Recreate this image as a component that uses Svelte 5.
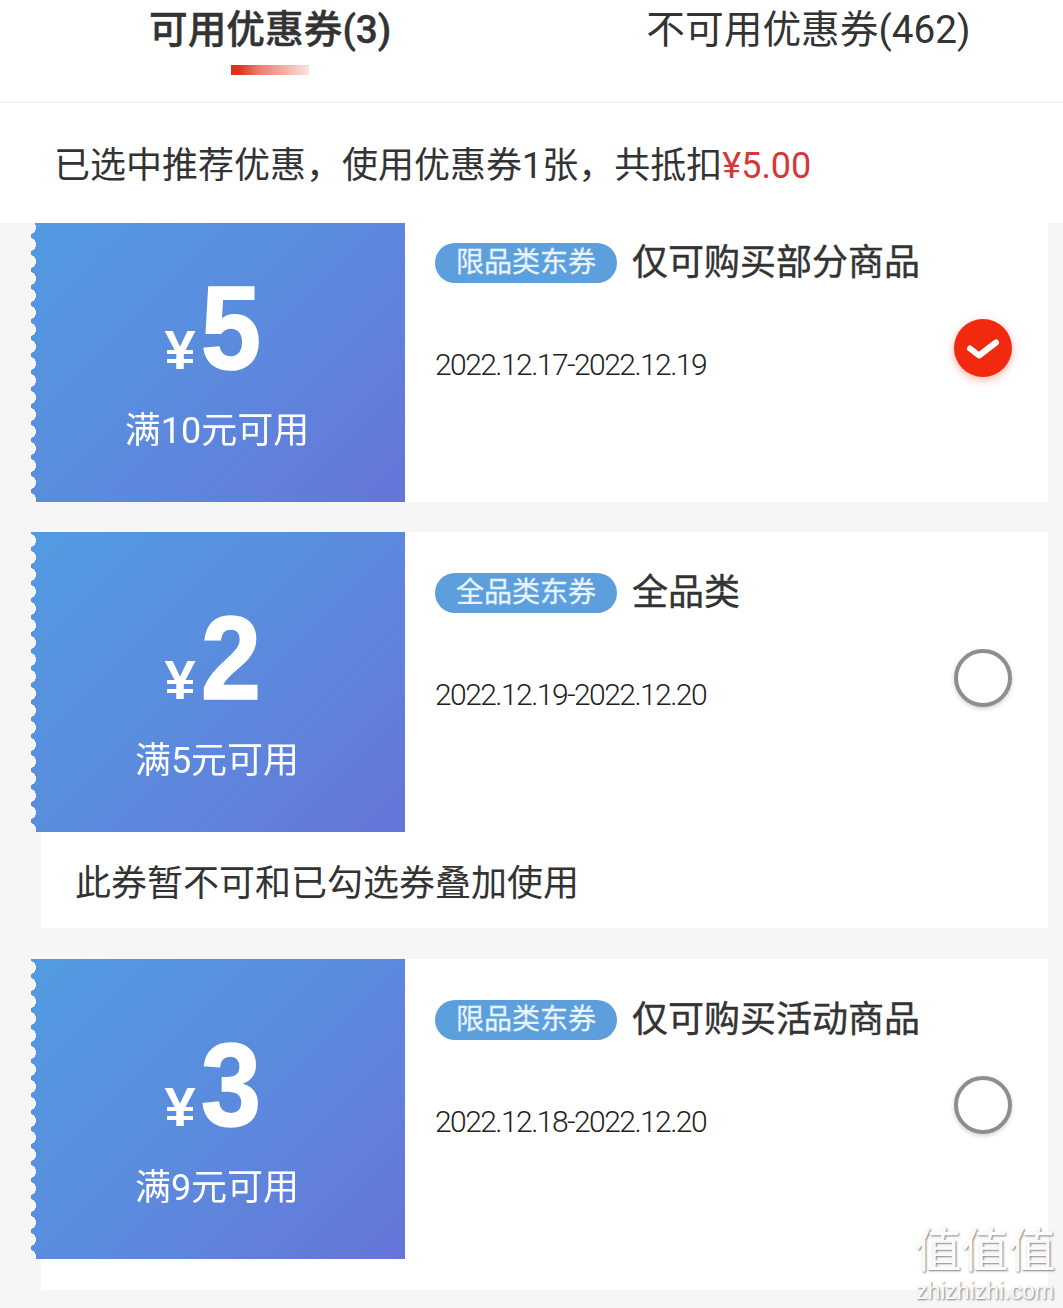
<script lang="ts">
  const coupons = [
    { amount: '5', cond: '满10元可用', tag: '限品类东券', title: '仅可购买部分商品', date: '2022.12.17-2022.12.19', selected: true },
    { amount: '2', cond: '满5元可用', tag: '全品类东券', title: '全品类', date: '2022.12.19-2022.12.20', selected: false, notice: '此券暂不可和已勾选券叠加使用' },
    { amount: '3', cond: '满9元可用', tag: '限品类东券', title: '仅可购买活动商品', date: '2022.12.18-2022.12.20', selected: false, notice: ' ', short: true },
  ];
</script>

<div class="page">
  <header class="tabs">
    <div class="tab active">
      <span>可用优惠券(3)</span>
      <i class="underline"></i>
    </div>
    <div class="tab">
      <span>不可用优惠券(462)</span>
    </div>
  </header>

  <p class="summary">已选中推荐优惠，使用优惠券1张，共抵扣<em>¥5.00</em></p>

  <div class="list">
    {#each coupons as c}
      <section class="item">
        <div class="coupon">
          <div class="stub">
            <div class="price"><span class="yen">¥</span><span class="num">{c.amount}</span></div>
            <div class="cond">{c.cond}</div>
          </div>
          <div class="body">
            <div class="info">
              <div class="head">
                <span class="tag">{c.tag}</span>
                <span class="title">{c.title}</span>
              </div>
              <div class="date">{c.date}</div>
            </div>
            {#if c.selected}
              <span class="radio on">
                <svg viewBox="0 0 58 58" width="58" height="58" aria-hidden="true">
                  <path d="M16 29.5L25 36.5L42 23.5" fill="none" stroke="#fff" stroke-width="6" stroke-linecap="round" stroke-linejoin="round" />
                </svg>
              </span>
            {:else}
              <span class="radio"></span>
            {/if}
          </div>
        </div>
        {#if c.notice}
          <div class="notice" class:short={c.short}>{c.notice}</div>
        {/if}
      </section>
    {/each}
  </div>

  <div class="watermark" aria-hidden="true">
    <div class="wm-big">值值值</div>
    <div class="wm-small">zhizhizhi.com</div>
  </div>
</div>

<style>
  :global(body) {
    margin: 0;
    background: #f6f6f6;
  }

  .page {
    position: relative;
    width: 1063px;
    height: 1308px;
    overflow: hidden;
    background: #f6f6f6;
    color: #333;
    font-family: Roboto, "Noto Sans CJK SC", sans-serif;
  }

  .tabs {
    display: flex;
    height: 101px;
    padding-left: 149px;
    gap: 255px;
    background: #fff;
    border-bottom: 2px solid #f3f3f3;
    font-size: 38.7px;
    line-height: 60px;
  }

  .tab {
    display: flex;
    flex-direction: column;
    align-items: center;
    white-space: nowrap;
  }

  .tab.active {
    font-weight: 500;
    -webkit-text-stroke: 0.4px #333;
  }

  .underline {
    width: 78px;
    height: 10px;
    margin-top: 5px;
    background: linear-gradient(90deg, #e0321e 0 10%, #ee7a6c 35%, #fbe3de 100%);
  }

  .summary {
    margin: 0;
    height: 120px;
    padding-left: 54px;
    background: #fff;
    font-size: 36px;
    line-height: 126px;
    white-space: nowrap;
  }

  .summary em {
    font-style: normal;
    color: #d6383a;
  }

  .list {
    height: 1085px;
    overflow: hidden;
    padding-left: 31px;
    padding-right: 15px;
  }

  .item {
    margin-bottom: 30px;
  }

  .item:first-child {
    margin-top: -21px;
  }

  .coupon {
    display: flex;
    height: 300px;
  }

  .stub {
    width: 374px;
    flex-shrink: 0;
    display: flex;
    flex-direction: column;
    align-items: center;
    padding-top: 57px;
    box-sizing: border-box;
    color: #fff;
    background: linear-gradient(135deg, #519be1 0%, #5b8bdd 50%, #6675d9 100%);
    -webkit-mask: radial-gradient(circle 7px at -2px 8.5px, transparent 97%, #000) 0 0 / 100% 17px;
    mask: radial-gradient(circle 7px at -2px 8.5px, transparent 97%, #000) 0 0 / 100% 17px;
  }

  .price {
    display: flex;
    align-items: baseline;
    height: 138px;
    font-family: "Liberation Sans", sans-serif;
    font-weight: 700;
    line-height: 138px;
    padding-right: 8px;
  }

  .yen {
    font-size: 56px;
    margin-right: 2px;
  }

  .num {
    display: inline-block;
    font-size: 118px;
    transform: scaleX(0.92);
    -webkit-text-stroke: 1.5px #fff;
  }

  .cond {
    margin-top: 9px;
    padding-right: 2px;
    font-size: 36px;
    line-height: 50px;
    white-space: nowrap;
  }

  .body {
    flex: 1;
    display: flex;
    justify-content: space-between;
    padding: 41px 36px 0 30px;
    background: #fff;
  }

  .head {
    display: flex;
    align-items: center;
    gap: 15px;
    height: 40px;
  }

  .tag {
    width: 182px;
    height: 40px;
    border-radius: 20px;
    background: #5c9fdc;
    color: #e6f3fa;
    font-size: 28px;
    line-height: 40px;
    text-align: center;
    -webkit-text-stroke: 0.3px #e6f3fa;
  }

  .title {
    font-size: 36px;
    line-height: 40px;
    white-space: nowrap;
    -webkit-text-stroke: 0.4px #333;
  }

  .date {
    margin-top: 60px;
    font-size: 30px;
    font-weight: 300;
    line-height: 44px;
    letter-spacing: -1.55px;
    color: #222;
    white-space: nowrap;
  }

  .radio {
    width: 58px;
    height: 58px;
    margin-top: 76px;
    box-sizing: border-box;
    border: 4px solid #8e8e8e;
    border-radius: 50%;
    box-shadow: 0 2px 4px rgba(0, 0, 0, 0.18);
    background: #fff;
  }

  .radio.on {
    border: 0;
    background: #f0290f;
    box-shadow: 0 3px 8px rgba(240, 41, 15, 0.35);
  }

  .radio svg {
    display: block;
  }

  .notice {
    height: 96px;
    margin: 0 0 31px 10px;
    padding-left: 34px;
    background: #fff;
    font-size: 36px;
    line-height: 105px;
    white-space: nowrap;
  }

  .notice.short {
    height: 31px;
  }

  .watermark {
    position: absolute;
    left: 914px;
    top: 1222px;
    width: 142px;
    text-align: center;
    color: #fbfbfb;
    text-shadow: 1px 1px 2px rgba(0, 0, 0, 0.5);
  }

  .wm-big {
    font-size: 47px;
    line-height: 58px;
    white-space: nowrap;
  }

  .wm-small {
    font-family: "Liberation Sans", sans-serif;
    font-size: 23px;
    line-height: 22px;
    white-space: nowrap;
  }
</style>
